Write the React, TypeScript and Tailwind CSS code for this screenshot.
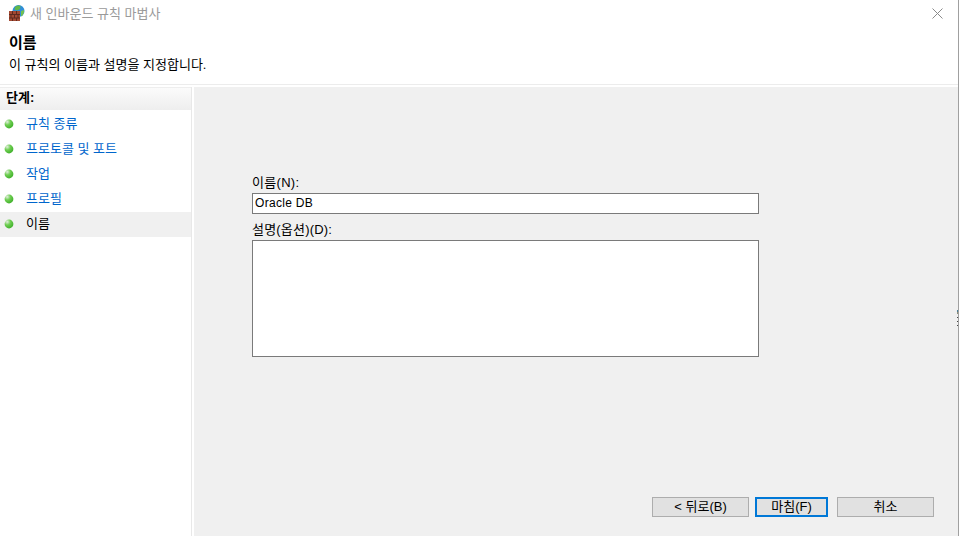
const font = { fontFamily: '"Liberation Sans","Noto Sans CJK KR",sans-serif' };

function Bullet() {
  return (
    <svg width="10" height="10" viewBox="0 0 10 10" className="shrink-0">
      <defs>
        <radialGradient id="g" cx="0.3" cy="0.25" r="0.8">
          <stop offset="0" stopColor="#e2eede" />
          <stop offset="0.45" stopColor="#6fce52" />
          <stop offset="1" stopColor="#3fb02a" />
        </radialGradient>
      </defs>
      <circle cx="5" cy="5" r="4.4" fill="url(#g)" />
    </svg>
  );
}

function Logo() {
  return (
    <svg width="17" height="17" viewBox="0 0 17 17" className="mt-[-2px] shrink-0">
      <circle cx="10.500" cy="7" r="6" fill="#2f8fd8" />
      <path d="M7 3c1.500-1.500 4-2 5.500-1l-.5 3-3 1.500-2.500-1z" fill="#62b84a" />
      <path d="M13 7l3-1c.3 3-1 5.500-3 6.500z" fill="#72c050" />
      <rect x="1" y="7" width="11" height="10" fill="#a34a33" />
      <path d="M1 10.500h11M1 14h11M4.500 7v3.500M8.500 7v3.500M3 10.500V14M6.500 10.500V14M10 10.500V14M4.500 14v3M8.500 14v3" stroke="#5e2a1e" strokeWidth="1" fill="none" />
    </svg>
  );
}

function Step({ label, active }: { label: string; active?: boolean }) {
  return (
    <div className={`flex h-[25px] items-center pb-[2px] pl-[4px] ${active ? 'bg-[#f0f0f0] text-black' : 'text-[#0066cc]'}`}>
      <Bullet />
      <span className="ml-[12px] text-[13px]">{label}</span>
    </div>
  );
}

function Btn({ label, primary, w }: { label: string; primary?: boolean; w: string }) {
  return (
    <button className={`h-[20px] ${w} ${primary ? 'border-2 border-[#0078d7]' : 'border border-[#adadad]'} bg-[#e1e1e1] text-[13px] text-black flex items-center justify-center`}>
      {label}
    </button>
  );
}

export default function App() {
  return (
    <div style={font} className="relative flex h-[536px] w-[959px] flex-col overflow-hidden border-r border-[#a0a0a0] bg-white text-black">
      <div className="flex h-[27px] shrink-0 items-center pl-[8px] pr-[15px]">
        <Logo />
        <span className="ml-[5px] text-[13px] text-[#9a9a9a]">새 인바운드 규칙 마법사</span>
        <svg width="11" height="11" viewBox="0 0 11 11" className="ml-auto">
          <path d="M0.500 0.500L10.500 10.500M10.500 0.500L0.500 10.500" stroke="#8a8a8a" strokeWidth="1" />
        </svg>
      </div>
      <div className="h-[58px] shrink-0 border-b border-[#ececec] pl-[9px]">
        <div className="mt-[6px] text-[15px] font-bold leading-[20px]">이름</div>
        <div className="mt-[4px] text-[13px] leading-[16px]">이 규칙의 이름과 설명을 지정합니다.</div>
      </div>
      <div className="flex min-h-0 flex-1 pt-[2px]">
        <div className="w-[192px] shrink-0 border-r border-[#e8e8e8]">
          <div className="flex h-[23px] items-center border-t border-[#eeeeee] bg-gradient-to-b from-[#fbfbfb] to-[#eeeeee] pb-[2px] pl-[6px] text-[13px] font-bold">단계:</div>
          <div className="mt-[2px]">
            <Step label="규칙 종류" />
            <Step label="프로토콜 및 포트" />
            <Step label="작업" />
            <Step label="프로필" />
            <Step label="이름" active />
          </div>
        </div>
        <div className="ml-[2px] flex min-w-0 flex-1 flex-col bg-[#f0f0f0]">
          <div className="ml-[58px] mt-[88px] w-[507px] text-[13px]">
            <div className="h-[18px] leading-[16px] tracking-[0.3px]">이름(N):</div>
            <input readOnly value="Oracle DB" style={font} className="block h-[21px] w-full border border-[#7a7a7a] bg-white pb-[2px] pl-[2px] text-[12px] tracking-[0.3px] outline-none" />
            <div className="mt-[8px] h-[18px] leading-[16px] tracking-[0.2px]">설명(옵션)(D):</div>
            <div className="h-[117px] w-full border border-[#7a7a7a] bg-white" />
          </div>
          <div className="mt-auto mb-[19px] flex justify-end pr-[24px]">
            <Btn label="< 뒤로(B)" w="w-[97px]" />
            <div className="w-[6px]" />
            <Btn label="마침(F)" primary w="w-[73px]" />
            <div className="w-[9px]" />
            <Btn label="취소" w="w-[97px]" />
          </div>
        </div>
      </div>
      <div className="absolute right-0 top-[310px] flex w-px flex-col">
        <div className="h-[2px] bg-[#4d7f96]" />
        <div className="h-[2px] bg-[#8d8d7a]" />
        <div className="h-[3px]" />
        <div className="h-px bg-[#444444]" />
        <div className="h-[3px]" />
        <div className="h-px bg-[#444444]" />
        <div className="h-[3px]" />
        <div className="h-px bg-[#444444]" />
      </div>
    </div>
  );
}
